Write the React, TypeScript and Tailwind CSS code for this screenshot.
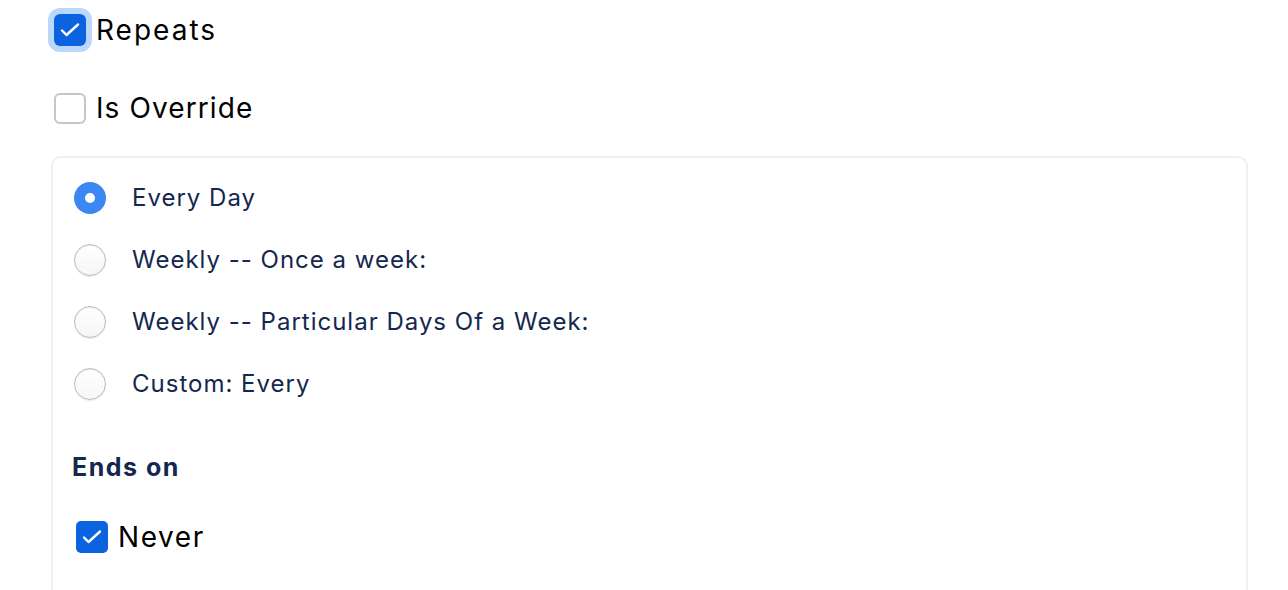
import React from "react";

const options = [
  "Every Day",
  "Weekly -- Once a week:",
  "Weekly -- Particular Days Of a Week:",
  "Custom: Every",
];

function Check() {
  return (
    <svg viewBox="0 0 32 32" className="h-full w-full">
      <path
        d="M8 16.5l4.5 4.5L24 10.5"
        fill="none"
        stroke="white"
        strokeWidth="2.4"
        strokeLinecap="round"
        strokeLinejoin="round"
      />
    </svg>
  );
}

function Radio({ checked }: { checked: boolean }) {
  if (checked) {
    return (
      <span className="flex h-8 w-8 shrink-0 items-center justify-center rounded-full bg-[#3b88f5]">
        <span className="h-[10px] w-[10px] rounded-full bg-white" />
      </span>
    );
  }
  return (
    <span className="h-8 w-8 shrink-0 rounded-full border border-[#bcbcbc] bg-gradient-to-b from-white to-[#f6f6f6] shadow-[inset_0_1px_1px_rgba(0,0,0,0.08),0_1px_1px_rgba(0,0,0,0.08)]" />
  );
}

export default function App() {
  return (
    <div
      className="min-h-[590px] bg-white pl-[51px] pr-[40px] pt-[14px]"
      style={{ fontFamily: "Inter, 'Noto Sans', sans-serif" }}
    >
      {/* Repeats */}
      <div className="flex items-center gap-[10px] pl-[3px]">
        <span className="h-8 w-8 shrink-0 rounded-[6px] bg-[#0b63e0] ring-[6px] ring-[#bcd7fc]">
          <Check />
        </span>
        <span className="text-[28px] leading-8 tracking-[2px] text-black">Repeats</span>
      </div>

      {/* Is Override */}
      <div className="mt-[46px] flex items-center gap-[10px] pl-[3px]">
        <span className="h-[31px] w-8 shrink-0 rounded-[6px] border-2 border-[#c3c6cd] bg-white" />
        <span className="text-[28px] leading-8 tracking-[1.1px] text-black">Is Override</span>
      </div>

      {/* Recurrence card */}
      <div className="mt-[32px] h-[460px] rounded-[10px] border-2 border-[#f0f0f0] pl-[21px] pt-[24px]">
        <div className="flex flex-col gap-[30px]">
          {options.map((label, i) => (
            <div key={label} className="flex items-center gap-[26px]">
              <Radio checked={i === 0} />
              <span className="text-[24px] leading-8 tracking-[1px] text-[#14274e]">
                {label}
              </span>
            </div>
          ))}
        </div>

        <div className="-ml-[2px] mt-[51px] text-[25px] font-bold leading-8 tracking-[1.5px] text-[#14274e]">
          Ends on
        </div>

        <div className="mt-[38px] flex items-center gap-[10px] pl-[2px]">
          <span className="h-8 w-8 shrink-0 rounded-[5px] bg-[#0b63e0]">
            <Check />
          </span>
          <span className="text-[28px] leading-8 tracking-[1.6px] text-black">Never</span>
        </div>
      </div>
    </div>
  );
}
